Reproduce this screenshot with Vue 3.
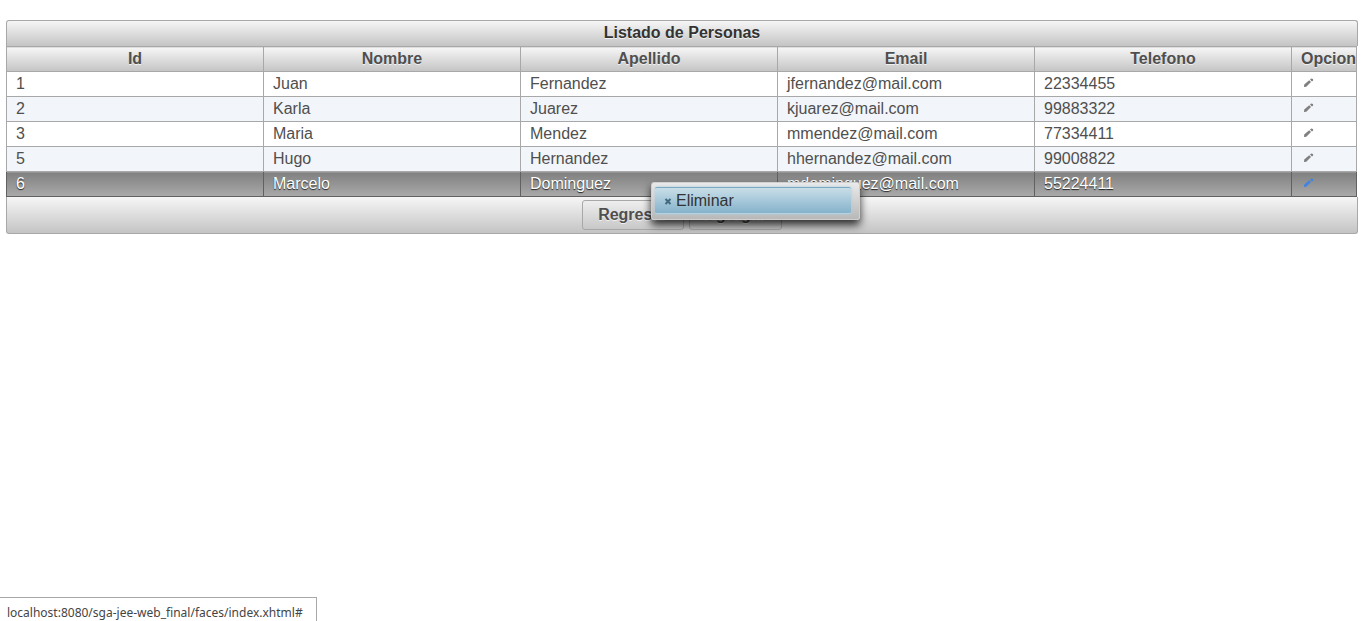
<script setup>
import { ref } from 'vue'

const columns = ['Id', 'Nombre', 'Apellido', 'Email', 'Telefono', 'Opciones']
const people = [
  { id: 1, name: 'Juan', surname: 'Fernandez', email: 'jfernandez@mail.com', phone: '22334455' },
  { id: 2, name: 'Karla', surname: 'Juarez', email: 'kjuarez@mail.com', phone: '99883322' },
  { id: 3, name: 'Maria', surname: 'Mendez', email: 'mmendez@mail.com', phone: '77334411' },
  { id: 5, name: 'Hugo', surname: 'Hernandez', email: 'hhernandez@mail.com', phone: '99008822' },
  { id: 6, name: 'Marcelo', surname: 'Dominguez', email: 'mdominguez@mail.com', phone: '55224411' },
]
const selected = ref(6)
</script>

<template>
  <main class="panel">
    <h1 id="list-title" class="bar title">Listado de Personas</h1>
    <table aria-labelledby="list-title">
      <colgroup>
        <col v-for="c in columns" :key="c" :class="{ options: c === 'Opciones' }" />
      </colgroup>
      <thead>
        <tr>
          <th v-for="c in columns" :key="c" scope="col">{{ c }}</th>
        </tr>
      </thead>
      <tbody>
        <tr v-for="p in people" :key="p.id" :class="{ selected: p.id === selected }" @click="selected = p.id">
          <td>{{ p.id }}</td>
          <td>{{ p.name }}</td>
          <td>{{ p.surname }}</td>
          <td>{{ p.email }}</td>
          <td>{{ p.phone }}</td>
          <td>
            <button class="edit" type="button" aria-label="Editar">
              <svg viewBox="0 0 16 16" width="16" height="16" aria-hidden="true">
                <path d="M3 12 L3.200 9.600 L8.200 5.200 L10 7 L5.300 11.700 Z" />
                <path d="M9 4.600 L10.200 3.600 L12 4 L12.200 5.400 L10.900 6.600 Z" />
              </svg>
            </button>
          </td>
        </tr>
      </tbody>
    </table>
    <footer class="bar footer">
      <button type="button" class="action">Regresar</button>
      <button type="button" class="action">Agregar</button>
    </footer>
  </main>

  <nav class="menu">
    <a href="#" class="menu-item">
      <svg viewBox="0 0 16 16" width="16" height="16" aria-hidden="true">
        <path d="M5.500 6 L10.500 11 M10.500 6 L5.500 11" />
      </svg>
      <span>Eliminar</span>
    </a>
  </nav>

  <div class="status">localhost:8080/sga-jee-web_final/faces/index.xhtml#</div>
</template>

<style>
body {
  background: #fff;
}
</style>

<style scoped>
.panel {
  margin: 20px 7px 0 6px;
  font: 16px/20px "Liberation Sans", Arial, sans-serif;
  color: #4f4f4f;
}
.bar {
  box-sizing: border-box;
  border: 1px solid #a8a8a8;
  background: linear-gradient(to bottom, #f6f6f6, #c4c4c4);
  text-align: center;
  text-shadow: 0 1px 0 rgba(255, 255, 255, 0.7);
}
.title {
  margin: 0;
  padding: 2px 10px 4px;
  border-bottom: 0;
  border-radius: 3px 3px 0 0;
  font-size: 16px;
  line-height: 19px;
  color: #333;
}
table {
  width: calc(100% - 1px);
  table-layout: fixed;
  border-collapse: collapse;
}
.options {
  width: 65px;
}
th,
td {
  box-sizing: border-box;
  height: 25px;
  padding: 2px 9px;
  border: 1px solid #a8a8a8;
  overflow: hidden;
  white-space: nowrap;
  text-align: left;
}
th {
  background: linear-gradient(to bottom, #f6f6f6, #c4c4c4);
  text-align: center;
  text-shadow: 0 1px 0 rgba(255, 255, 255, 0.7);
}
tbody tr:nth-child(even) {
  background: #f2f5f9;
}
tbody .selected td {
  border-color: #616161;
  background: linear-gradient(to bottom, #808080, #aaa);
  color: #fff;
  text-shadow: 0 1px 1px rgba(0, 0, 0, 0.8);
}
.edit {
  display: block;
  width: 16px;
  height: 20px;
  padding: 1px 0 3px;
  border: 0;
  background: none;
}
.edit svg {
  display: block;
  fill: #808080;
}
.selected .edit svg {
  fill: #4283e0;
}
.footer {
  display: flex;
  justify-content: center;
  gap: 5px;
  padding: 3px 10px;
  border-top: 0;
  border-radius: 0 0 3px 3px;
}
.action {
  height: 30px;
  padding: 0 15px;
  border: 1px solid #a8a8a8;
  border-radius: 3px;
  background: linear-gradient(to bottom, #eee, #c8c8c8);
  font: bold 16px/20px "Liberation Sans", Arial, sans-serif;
  color: #4f4f4f;
  text-shadow: 0 1px 0 rgba(255, 255, 255, 0.7);
}
.menu {
  position: absolute;
  top: 182px;
  left: 651px;
  box-sizing: border-box;
  width: 209px;
  padding: 4px 8px 5px 3px;
  border: 1px solid #d0d0d0;
  border-radius: 3px;
  background: linear-gradient(to bottom, #eaeaea, #b8b8b8);
  box-shadow: 0 5px 8px rgba(0, 0, 0, 0.8);
}
.menu-item {
  display: flex;
  align-items: center;
  box-sizing: border-box;
  height: 27px;
  padding: 0 5px;
  border: 1px solid #b4d2e0;
  border-width: 1px 0;
  border-top-color: #79a9c3;
  border-radius: 2px;
  background: linear-gradient(to bottom, #c9dee8, #85b2cb);
  box-shadow: 0 0 3px #a9cbdb;
  font: 16px/20px "Liberation Sans", Arial, sans-serif;
  color: #333;
  text-decoration: none;
}
.menu-item svg {
  fill: none;
  stroke: #3f6b80;
  stroke-width: 2;
}
.status {
  position: fixed;
  bottom: 0;
  left: 0;
  box-sizing: border-box;
  height: 24px;
  padding: 5px 13px 0 7px;
  border: 1px solid #a8a8a8;
  border-width: 1px 1px 0 0;
  background: #fff;
  font: 12px/20px "Noto Sans", sans-serif;
  color: #444;
  white-space: nowrap;
}
</style>
